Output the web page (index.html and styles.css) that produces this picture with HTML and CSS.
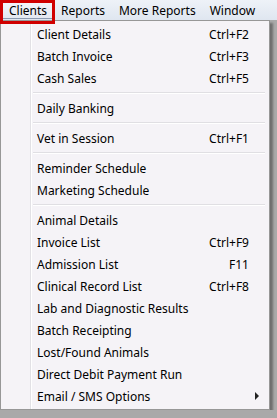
FILE: index.html
```html
<!DOCTYPE html>
<html lang="en">
<head>
  <meta charset="UTF-8" />
  <title>Clients menu</title>
  <link rel="stylesheet" href="styles.css">
</head>
<body>
  <div class="menubar">
    <span class="menubar-item active">Clients</span>
    <span class="menubar-item">Reports</span>
    <span class="menubar-item">More Reports</span>
    <span class="menubar-item">Window</span>
    <div class="callout"></div>
  </div>

  <div class="dropdown">
    <div class="item"><span>Client Details</span><span class="key">Ctrl+F2</span></div>
    <div class="item"><span>Batch Invoice</span><span class="key">Ctrl+F3</span></div>
    <div class="item"><span>Cash Sales</span><span class="key">Ctrl+F5</span></div>
    <div class="sep"></div>
    <div class="item"><span>Daily Banking</span></div>
    <div class="sep"></div>
    <div class="item"><span>Vet in Session</span><span class="key">Ctrl+F1</span></div>
    <div class="sep"></div>
    <div class="item"><span>Reminder Schedule</span></div>
    <div class="item"><span>Marketing Schedule</span></div>
    <div class="sep"></div>
    <div class="item"><span>Animal Details</span></div>
    <div class="item"><span>Invoice List</span><span class="key">Ctrl+F9</span></div>
    <div class="item"><span>Admission List</span><span class="key">F11</span></div>
    <div class="item"><span>Clinical Record List</span><span class="key">Ctrl+F8</span></div>
    <div class="item"><span>Lab and Diagnostic Results</span></div>
    <div class="item"><span>Batch Receipting</span></div>
    <div class="item"><span>Lost/Found Animals</span></div>
    <div class="item"><span>Direct Debit Payment Run</span></div>
    <div class="item"><span>Email / SMS Options</span><span class="arrow"></span></div>
  </div>
</body>
</html>
```

FILE: styles.css
```css
body {
  margin: 0;
  background: #a9a9a9;
  font-family: "Noto Sans", "DejaVu Sans", sans-serif;
  font-size: 12px;
  color: #000;
}
.menubar {
  position: relative;
  display: flex;
  align-items: center;
  height: 20px;
  padding-left: 2px;
  background: linear-gradient(#eef2f8, #dfe6f0);
}
.menubar-item {
  padding: 0 6px;
  height: 18px;
  line-height: 17px;
  border: 1px solid transparent;
  box-sizing: border-box;
}
.menubar-item.active {
  border-color: #8c9bb0;
  background: linear-gradient(#f4f6fa, #e3e8f0);
}
.callout {
  position: absolute;
  left: 0;
  top: 0;
  width: 55px;
  height: 24px;
  border: 3px solid #d00000;
  box-sizing: border-box;
}
.dropdown {
  width: 270px;
  box-sizing: border-box;
  padding: 2px;
  background: #f5f3f7;
  border: 1px solid #979797;
  box-shadow: 3px 3px 2px rgba(0, 0, 0, 0.35);
  background-image: linear-gradient(to right, transparent 29px, #e2e1e5 29px, #e2e1e5 30px, #fff 30px, #fff 31px, transparent 31px);
}
.item {
  display: flex;
  align-items: center;
  height: 22px;
  padding-left: 34px;
  padding-right: 18px;
}
.item span:first-child {
  flex: 1;
}
.key {
  text-align: right;
}
.arrow {
  width: 0;
  height: 0;
  margin-right: -10px;
  border-top: 4px solid transparent;
  border-bottom: 4px solid transparent;
  border-left: 4px solid #222;
}
.sep {
  height: 8px;
  margin-left: 30px;
  margin-right: 2px;
  background: linear-gradient(transparent 3px, #e0dfe3 3px, #e0dfe3 4px, #fff 4px, #fff 5px, transparent 5px);
}
```
